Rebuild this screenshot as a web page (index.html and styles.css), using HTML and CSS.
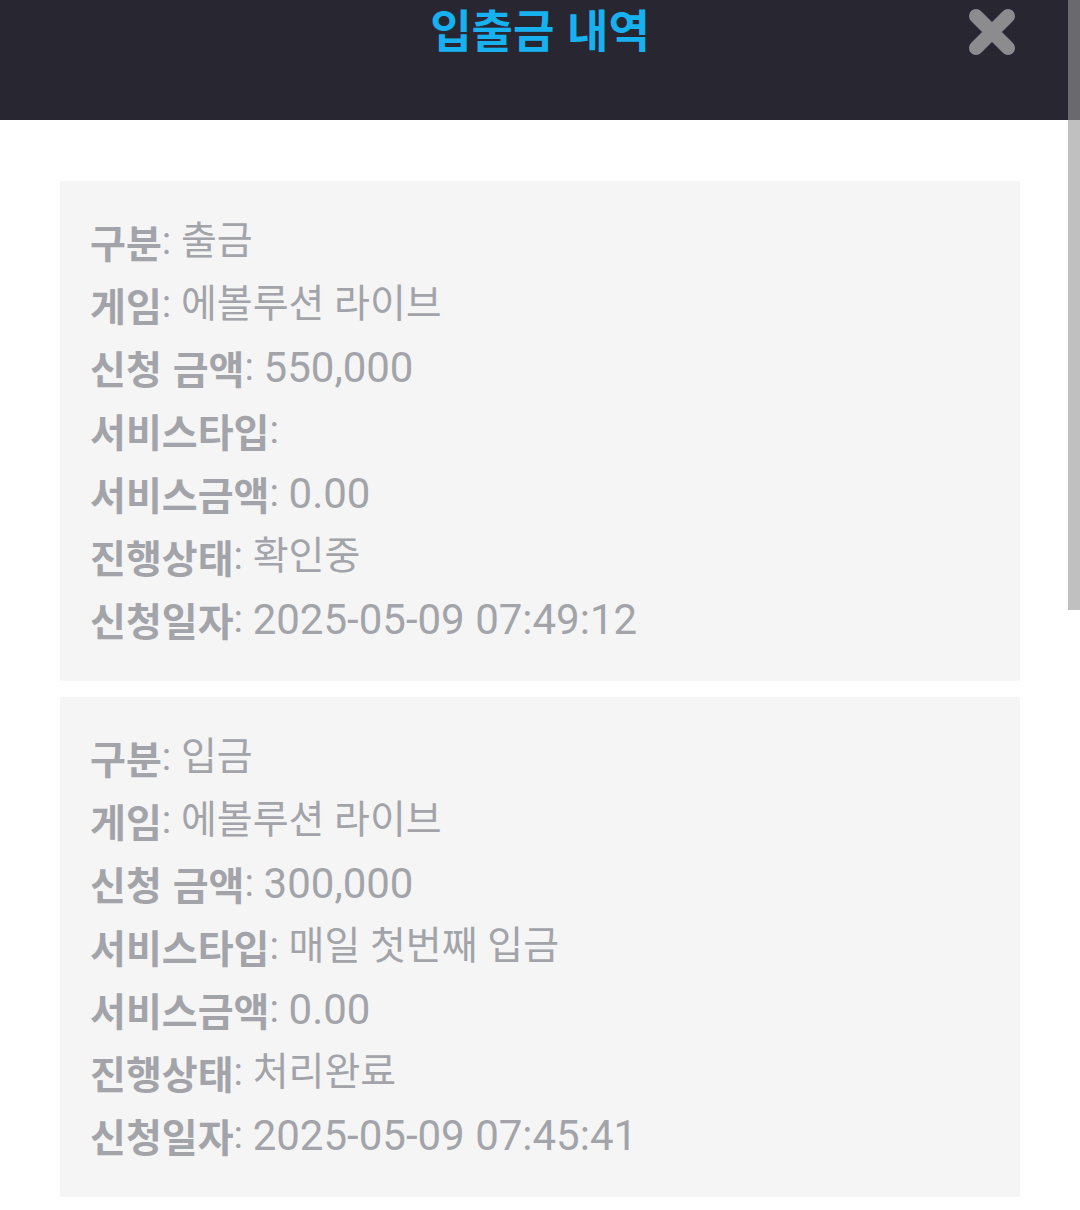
FILE: index.html
```html
<!DOCTYPE html>
<html lang="ko">
<head>
  <meta charset="UTF-8" />
  <meta name="viewport" content="width=device-width, initial-scale=1.0"/>
  <title>입출금 내역</title>
  <link rel="stylesheet" href="styles.css">
</head>
<body>

  <!-- HEADER -->
  <div class="header">
    <h1 class="title">입출금 내역</h1>
    <button class="close-btn" aria-label="닫기">
      <svg width="52" height="52" viewBox="0 0 52 52">
        <path d="M10 10 L42 42 M42 10 L10 42" stroke="#8c8c8f" stroke-width="14" stroke-linecap="round"/>
      </svg>
    </button>
  </div>

  <!-- HISTORY LIST -->
  <div class="history">
    <div class="history-card">
      <p><strong>구분</strong>: 출금</p>
      <p><strong>게임</strong>: 에볼루션 라이브</p>
      <p><strong>신청 금액</strong>: <span class="num">550,000</span></p>
      <p><strong>서비스타입</strong>:</p>
      <p><strong>서비스금액</strong>: <span class="num">0.00</span></p>
      <p><strong>진행상태</strong>: 확인중</p>
      <p><strong>신청일자</strong>: <span class="num">2025-05-09 07:49:12</span></p>
    </div>
    <div class="history-card">
      <p><strong>구분</strong>: 입금</p>
      <p><strong>게임</strong>: 에볼루션 라이브</p>
      <p><strong>신청 금액</strong>: <span class="num">300,000</span></p>
      <p><strong>서비스타입</strong>: 매일 첫번째 입금</p>
      <p><strong>서비스금액</strong>: <span class="num">0.00</span></p>
      <p><strong>진행상태</strong>: 처리완료</p>
      <p><strong>신청일자</strong>: <span class="num">2025-05-09 07:45:41</span></p>
    </div>
  </div>

  <div class="scrollbar"></div>

</body>
</html>
```

FILE: styles.css
```css
* {
  box-sizing: border-box;
  font-family: Roboto, "Noto Sans CJK KR", sans-serif;
}

body {
  margin: 0;
  background-color: #fff;
  overflow: hidden;
}

.header {
  position: relative;
  height: 120px;
  background-color: #282731;
  display: flex;
  justify-content: center;
}

.title {
  margin: 0;
  color: #17b1ef;
  font-size: 45px;
  font-weight: 700;
  line-height: 58px;
  font-family: "Noto Sans CJK KR", sans-serif;
}

.close-btn {
  position: absolute;
  top: 6px;
  right: 62px;
  padding: 0;
  border: none;
  background: none;
  cursor: pointer;
}

/* History cards */
.history {
  padding: 61px 60px 0;
  display: flex;
  flex-direction: column;
  gap: 16px;
}

.history-card {
  background: #f5f5f5;
  padding: 29px 30px 30px;
  border-radius: 2px;
}

.history-card p {
  margin: 0;
  height: 63px;
  display: flex;
  align-items: center;
  color: #a2a4a9;
  font-size: 39px;
  line-height: 1;
  white-space: pre;
}

.history-card strong {
  font-weight: 700;
  font-family: "Noto Sans CJK KR", sans-serif;
}

.history-card .num {
  font-size: 42px;
}

.scrollbar {
  position: absolute;
  top: 0;
  right: 0;
  width: 12px;
  height: 610px;
  background: rgba(150, 150, 150, 0.6);
}
```
